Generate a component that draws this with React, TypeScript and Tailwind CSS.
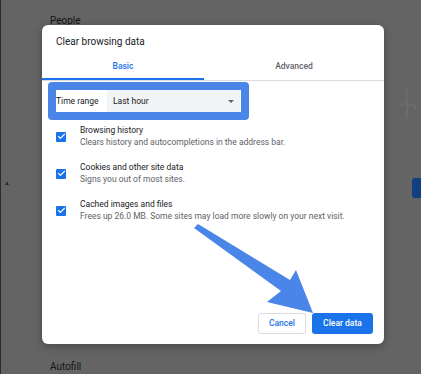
import { Check } from "lucide-react"

const items = [
  {
    label: "Browsing history",
    desc: "Clears history and autocompletions in the address bar.",
  },
  {
    label: "Cookies and other site data",
    desc: "Signs you out of most sites.",
  },
  {
    label: "Cached images and files",
    desc: "Frees up 26.0 MB. Some sites may load more slowly on your next visit.",
  },
]

function Arrow() {
  return (
    <svg
      className="absolute inset-0 pointer-events-none"
      width="421"
      height="374"
      viewBox="0 0 421 374"
    >
      <polygon
        points="193,228 197,224 289,280 295,270 312,313 266,302 280,291"
        fill="#4a86e8"
      />
    </svg>
  )
}

export default function App() {
  return (
    <div
      className="relative w-[421px] h-[374px] overflow-hidden bg-[#646464] border-l border-[#2c2c2c] text-[#202124]"
      style={{ fontFamily: "Roboto, 'Liberation Sans', sans-serif" }}
    >
      {/* page behind the scrim */}
      <div className="flex flex-col justify-between h-full pl-[49px] pt-[15px] pb-[1px] text-[10px] leading-[12px] text-[#151515]">
        <div>People</div>
        <div className="flex items-start justify-between -ml-[46px] mb-[10px]">
          <span className="text-[6px] leading-[6px] mt-0 text-[#222]">▲</span>
          <span className="mr-[27px] mt-[7px] text-[6px] leading-[6px] text-[#222]">▼</span>
          <span className="w-[9px] h-[20px] -mt-[2px] rounded-l-[3px] bg-[#123f80]" />
        </div>
        <div>Autofill</div>
      </div>

      <svg className="absolute left-[396px] top-[88px]" width="20" height="32" viewBox="0 0 20 32">
        <path d="M10 1 V30 M2 17 C6 17 8 15 10 12 M10 17 H18 V22" stroke="#737373" strokeWidth="1" fill="none" />
      </svg>

      {/* dialog */}
      <div className="absolute left-[41px] top-[25px] w-[342px] h-[319px] bg-white rounded-[6px] shadow-[0_2px_8px_rgba(0,0,0,0.3)] flex flex-col">
        <div className="pt-[11px] pl-[14px] text-[10px] leading-[12px] text-[#202124]">
          Clear browsing data
        </div>

        <div className="flex h-[33px] border-b border-[#dadce0] text-[8.5px] leading-[11px] font-medium">
          <div className="w-[162px] pt-[13px] text-center text-[#1a73e8] border-b-2 border-[#1a73e8]">
            Basic
          </div>
          <div className="flex-1 pt-[13px] text-center text-[#5f6368]">Advanced</div>
        </div>

        <div className="ml-[6px] mt-[1px] w-[201px] h-[38px] p-[8px] rounded-[4px] bg-[#4a86e8]">
          <div className="flex items-center h-full bg-white text-[8.5px]">
            <span className="w-[51px] whitespace-nowrap">Time range</span>
            <div className="flex items-center justify-between flex-1 h-full mr-[1px] pl-[6px] pr-[6px] bg-[#f1f3f4]">
              <span>Last hour</span>
              <span className="w-0 h-0 border-l-[3px] border-r-[3px] border-t-[3px] border-l-transparent border-r-transparent border-t-[#5f6368]" />
            </div>
          </div>
        </div>

        <div className="flex flex-col gap-[12px] mt-[4px] pl-[14px]">
          {items.map((item) => (
            <div key={item.label} className="flex items-center gap-[14px]">
              <div className="flex items-center justify-center w-[10px] h-[10px] rounded-[1px] bg-[#1a73e8]">
                <Check size={9} strokeWidth={3} className="text-white" />
              </div>
              <div className="text-[8.5px]">
                <div className="leading-[12px] text-[#202124]">{item.label}</div>
                <div className="leading-[13px] text-[#5f6368]">{item.desc}</div>
              </div>
            </div>
          ))}
        </div>

        <div className="flex justify-end gap-[6px] mt-auto pr-[11px] pb-[10px] text-[8.5px] font-medium">
          <button className="w-[48px] h-[21px] rounded-[3px] border border-[#dadce0] bg-white text-[#1a73e8]">
            Cancel
          </button>
          <button className="w-[61px] h-[21px] rounded-[3px] bg-[#1a73e8] text-white">
            Clear data
          </button>
        </div>
      </div>

      <Arrow />
    </div>
  )
}
